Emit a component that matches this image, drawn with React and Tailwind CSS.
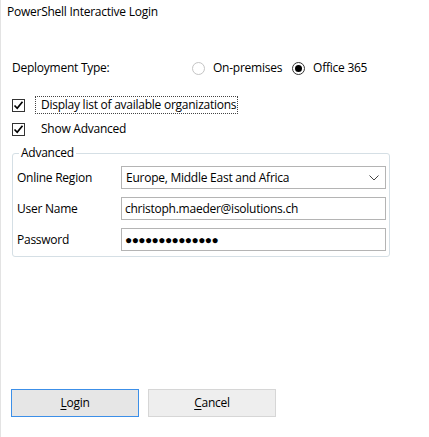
import React from 'react';

const font = { fontFamily: '"Segoe UI", "Open Sans", "Noto Sans", sans-serif' };

function Check() {
  return (
    <span className="flex h-[13px] w-[13px] shrink-0 items-center justify-center border border-[#333333] bg-white">
      <svg width="11" height="11" viewBox="0 0 11 11">
        <path d="M1.5 5.5 L4.2 8.3 L9.5 1.8" fill="none" stroke="#000" strokeWidth="1.7" />
      </svg>
    </span>
  );
}

function Radio({ checked, label }) {
  return (
    <div className="flex items-center">
      <span
        className={
          checked
            ? 'flex h-[13px] w-[13px] items-center justify-center rounded-full border border-[#333333]'
            : 'flex h-[13px] w-[13px] items-center justify-center rounded-full border border-[#c4c4c4]'
        }
      >
        {checked && <span className="h-[7px] w-[7px] rounded-full bg-black" />}
      </span>
      <span className="ml-[8px]">{label}</span>
    </div>
  );
}

function Field({ label, children }) {
  return (
    <div className="flex items-center">
      <span className="w-[104px]">{label}</span>
      {children}
    </div>
  );
}

export default function App() {
  return (
    <div
      className="flex h-[437px] w-[429px] flex-col border-l border-[#e3e3e3] bg-white text-[12px] leading-[16px] tracking-[-0.25px] text-black"
      style={font}
    >
      <div className="pl-[6px] pt-[4px]">PowerShell Interactive Login</div>

      <div className="mt-[40px] flex items-center pl-[11px]">
        <span className="w-[180px]">Deployment Type:</span>
        <div className="flex items-center gap-[10px]">
          <Radio label="On-premises" />
          <Radio checked label="Office 365" />
        </div>
      </div>

      <div className="mt-[20px] flex items-center pl-[11px]">
        <Check />
        <span className="ml-[10px] border border-dotted border-[#444] pl-[5px] pr-[1px]">
          Display list of available organizations
        </span>
      </div>

      <div className="mt-[7px] flex items-center pl-[11px]">
        <Check />
        <span className="ml-[16px]">Show Advanced</span>
      </div>

      <fieldset className="ml-[11px] mt-[8px] w-[378px] rounded-[3px] border border-[#d5dfe5] pb-[5px] pl-[4px] pr-[3px] pt-[5px]">
        <legend className="ml-[2px] px-[2px] leading-[16px]">Advanced</legend>
        <div className="flex flex-col gap-[8px]">
          <Field label="Online Region">
            <div className="flex h-[23px] w-[265px] items-center justify-between border border-[#b4b4b4] pl-[4px] pr-[6px]">
              <span>Europe, Middle East and Africa</span>
              <svg width="10" height="6" viewBox="0 0 10 6">
                <path d="M0.5 0.5 L5 5 L9.5 0.5" fill="none" stroke="#444" strokeWidth="1" />
              </svg>
            </div>
          </Field>
          <Field label="User Name">
            <div className="flex h-[23px] w-[265px] items-center border border-[#b4b4b4] pl-[3px]">
              christoph.maeder@isolutions.ch
            </div>
          </Field>
          <Field label="Password">
            <div className="flex h-[23px] w-[265px] items-center border border-[#b4b4b4] pl-[3px] text-[12px] tracking-[-0.6px]">
              ●●●●●●●●●●●●●●
            </div>
          </Field>
        </div>
      </fieldset>

      <div className="mt-auto mb-[20px] flex gap-[9px] pl-[10px]">
        <button className="flex h-[28px] w-[128px] items-center justify-center border border-[#3c8fe8] bg-[#e6e6e6]">
          <span>
            <span className="underline underline-offset-2">L</span>ogin
          </span>
        </button>
        <button className="flex h-[28px] w-[128px] items-center justify-center border border-[#d6d6d6] bg-[#eeeeee]">
          <span>
            <span className="underline underline-offset-2">C</span>ancel
          </span>
        </button>
      </div>
    </div>
  );
}
